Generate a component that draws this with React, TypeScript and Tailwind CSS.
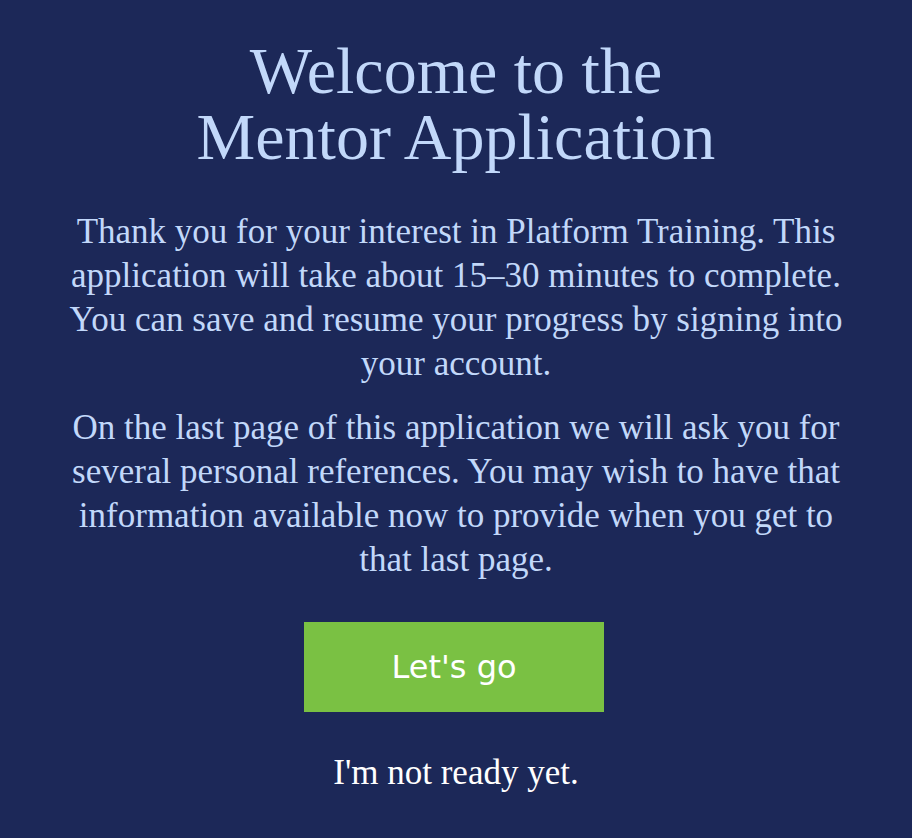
export default function App() {
  return (
    <div className="min-h-[838px] bg-[#1c2858] flex flex-col items-center pt-[38px] text-center">
      <h1 className="font-['Liberation_Serif',serif] text-[66px] leading-[66px] text-[#c2d8fa]">
        Welcome to the
        <br />
        Mentor Application
      </h1>
      <div className="mt-[40px] w-[790px] font-['Liberation_Serif',serif] text-[35px] leading-[44px] text-[#c2d8fa] flex flex-col gap-[20px]">
        <p>
          Thank you for your interest in Platform Training. This application will take about 15–30 minutes to
          complete. You can save and resume your progress by signing into your account.
        </p>
        <p>
          On the last page of this application we will ask you for several personal references. You may wish to
          have that information available now to provide when you get to that last page.
        </p>
      </div>
      <button className="mt-[40px] mr-[4px] w-[300px] h-[90px] bg-[#7ac143] text-white font-['DejaVu_Sans',sans-serif] text-[32px]">
        Let's go
      </button>
      <a className="mt-[41px] font-['Liberation_Serif',serif] text-[35px] leading-[40px] text-white">
        I'm not ready yet.
      </a>
    </div>
  )
}
